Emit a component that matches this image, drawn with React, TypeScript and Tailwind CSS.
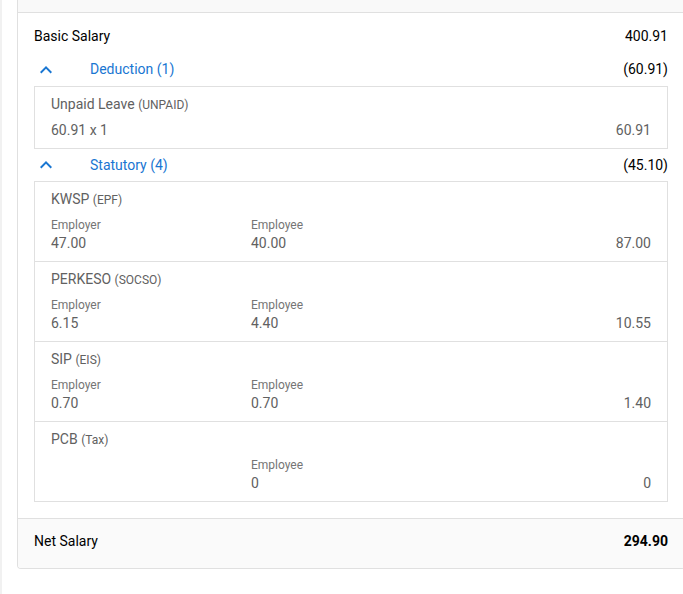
import React from "react";

function Chevron() {
  return (
    <svg width="24" height="24" viewBox="0 0 24 24" className="shrink-0">
      <path d="M12 8l-6 6 1.41 1.41L12 10.83l4.59 4.58L18 14z" fill="#1976d2" />
    </svg>
  );
}

type Stat = { name: string; code: string; employer?: string; employee: string; total: string };

const stats: Stat[] = [
  { name: "KWSP", code: "EPF", employer: "47.00", employee: "40.00", total: "87.00" },
  { name: "PERKESO", code: "SOCSO", employer: "6.15", employee: "4.40", total: "10.55" },
  { name: "SIP", code: "EIS", employer: "0.70", employee: "0.70", total: "1.40" },
  { name: "PCB", code: "Tax", employee: "0", total: "0" },
];

function SectionHeader({ title, amount, tall }: { title: string; amount: string; tall?: boolean }) {
  return (
    <div className={"flex items-center justify-between " + (tall ? "h-[33px]" : "h-[32px]")}>
      <div className="flex items-center">
        <div className="w-[56px] flex items-center">
          <Chevron />
        </div>
        <span className="text-[14px] text-[#1976d2]">{title}</span>
      </div>
      <span className="text-[14px] text-[#000]">{amount}</span>
    </div>
  );
}

export default function App() {
  return (
    <div
      className="w-[683px] h-[594px] bg-white flex overflow-hidden"
      style={{ fontFamily: "Roboto, 'Noto Sans', sans-serif" }}
    >
      <div className="w-[2px] shrink-0 bg-[#f1f1f1]" />
      <div className="w-[15px] shrink-0" />
      <div className="w-[668px] shrink-0 self-start border-l border-r border-b border-[#e0e0e0] rounded-b-[4px] overflow-hidden">
        <div className="h-[13px] bg-[#f9f9f9] border-b border-[#e0e0e0]" />
        <div className="px-4 pt-[7px] pb-4 bg-white">
          <div className="flex h-[33px] items-center justify-between text-[14px] text-[#000]">
            <span>Basic Salary</span>
            <span>400.91</span>
          </div>
          <SectionHeader title="Deduction (1)" amount="(60.91)" tall />
          <div className="border border-[#e0e0e0] px-4 pt-[7px] pb-2">
            <div className="h-5 leading-5 text-[14px] text-[#616161]">
              Unpaid Leave <span className="text-[12px]">(UNPAID)</span>
            </div>
            <div className="mt-[6px] flex justify-between h-5 leading-5 text-[14px] text-[#616161]">
              <span>60.91 x 1</span>
              <span>60.91</span>
            </div>
          </div>
          <SectionHeader title="Statutory (4)" amount="(45.10)" />
          <div className="border border-[#e0e0e0]">
            {stats.map((s, i) => (
              <div
                key={s.name}
                className={
                  "px-4 pt-[7px] pb-2 " + (i > 0 ? "border-t border-[#e0e0e0]" : "")
                }
              >
                <div className="h-5 leading-5 text-[14px] text-[#616161]">
                  {s.name} <span className="text-[12px]">({s.code})</span>
                </div>
                <div className="mt-2 grid grid-cols-3 text-[#616161]">
                  <div>
                    {s.employer !== undefined && (
                      <>
                        <div className="h-4 leading-4 text-[12px] text-[#757575]">Employer</div>
                        <div className="h-5 leading-5 text-[14px]">{s.employer}</div>
                      </>
                    )}
                  </div>
                  <div>
                    <div className="h-4 leading-4 text-[12px] text-[#757575]">Employee</div>
                    <div className="h-5 leading-5 text-[14px]">{s.employee}</div>
                  </div>
                  <div className="flex flex-col justify-end items-end">
                    <div className="h-5 leading-5 text-[14px]">{s.total}</div>
                  </div>
                </div>
              </div>
            ))}
          </div>
        </div>
        <div className="bg-[#fafafa] border-t border-[#e0e0e0] px-4 pt-3 pb-[17px] flex justify-between h-[50px] items-start text-[14px] text-[#000]">
          <span className="leading-5">Net Salary</span>
          <span className="leading-5 font-bold">294.90</span>
        </div>
      </div>
    </div>
  );
}
